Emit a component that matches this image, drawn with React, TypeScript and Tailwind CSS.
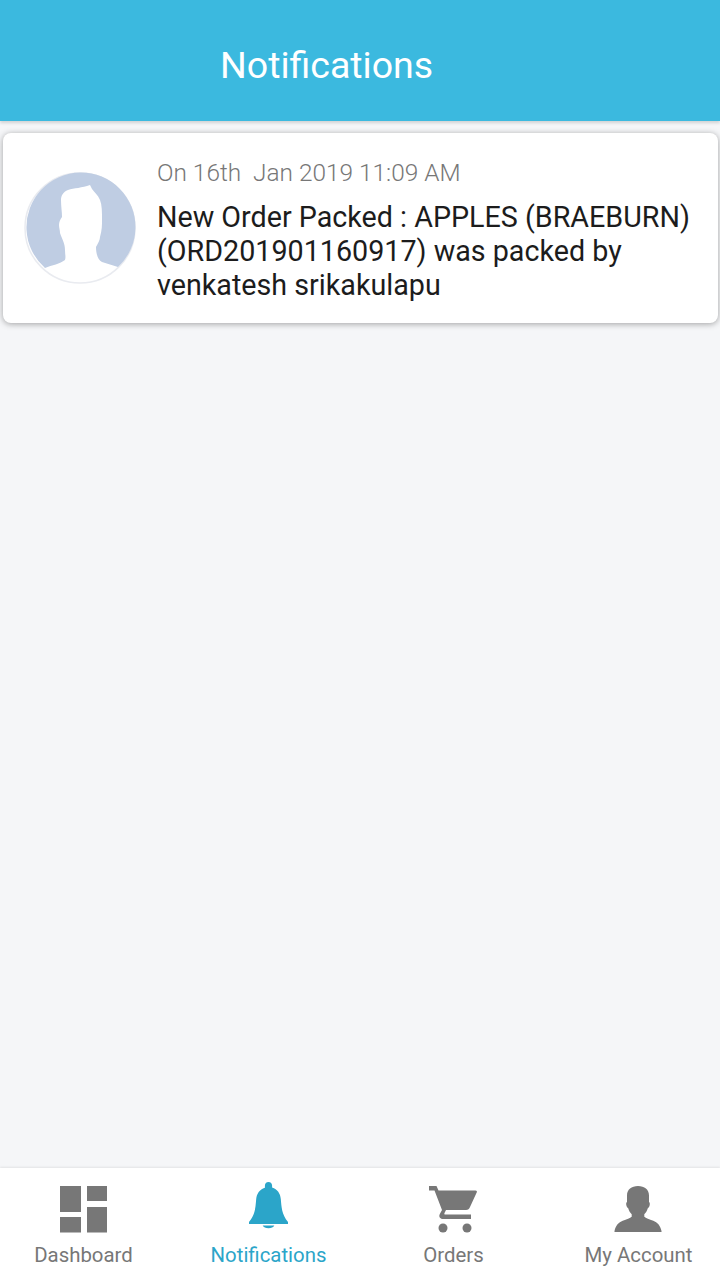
import type { ReactNode } from 'react';

function DashboardIcon() {
  return (
    <svg width="48" height="48" viewBox="1 0 48 48" fill="#777777">
      <rect x="1" y="1" width="21" height="26" />
      <rect x="28" y="1" width="20" height="15" />
      <rect x="1" y="32" width="21" height="15.500" />
      <rect x="28" y="22" width="20" height="25.500" />
    </svg>
  );
}

function BellIcon() {
  return (
    <svg width="48" height="48" viewBox="0.500 0 48 48" fill="#2ba5c9" className="overflow-visible">
      <path d="M24-3c2.200 0 3.600 1.600 3.600 3.600v2c5.400 1.800 8.200 6 8.700 11.400.7 8 .9 15.500 7.200 23V39h-39v-1.900c6.300-7.500 6.500-15 7.200-23 .5-5.400 3.300-9.600 8.700-11.400v-2C20.400-1.400 21.800-3 24-3z" />
      <path d="M18.200 40.500h11.600c-.8 1.700-3 2.700-5.800 2.700s-5-1-5.800-2.700z" />
    </svg>
  );
}

function CartIcon() {
  return (
    <svg width="48" height="48" viewBox="1 0 48 48" fill="#777777" className="overflow-visible">
      <path d="M0 1h7.500l2 4.500H46.500c1.200 0 1.700.8 1.300 1.800L41 22c-.7 1.700-2 3-4 3H17l-1.500 3c-.5 1 0 1.500 1 1.500H42V34H14c-3 0-4.500-2.500-3.200-5l2.200-4L5.500 5.500H0z" />
      <circle cx="14" cy="43" r="4.500" />
      <circle cx="38" cy="43" r="4.500" />
    </svg>
  );
}

function AccountIcon() {
  return (
    <svg width="48" height="48" viewBox="1 0 48 48" fill="#777777" className="overflow-visible">
      <path d="M24 1c6.500 0 11 3.500 11 9.500V17c.9.300 1 2 .6 3.600-.4 1.600-1 2.400-1.800 2.600-.7 2.600-2 4.600-3.500 6v2.500c1.500 1.500 5 2.500 9 4 4 1.500 7 4.500 8.200 10.300v1H.5v-1C1.700 40.200 4.700 37.200 8.700 35.700c4-1.500 7.500-2.500 9-4v-2.500c-1.500-1.400-2.800-3.400-3.500-6-.8-.2-1.400-1-1.800-2.600-.4-1.600-.3-3.300.6-3.600v-6.500C13 4.500 17.500 1 24 1z" />
    </svg>
  );
}

function NavItem({ icon, label, active }: { icon: ReactNode; label: string; active?: boolean }) {
  return (
    <div className="flex flex-col items-center pt-[17px]">
      {icon}
      <span className={`mt-[9px] text-[20.400px] leading-[26px] whitespace-nowrap ${active ? 'text-[#2ba5c9]' : 'text-[#777777]'}`}>
        {label}
      </span>
    </div>
  );
}

export default function App() {
  return (
    <div className="flex h-[1280px] w-[720px] flex-col overflow-hidden bg-[#f5f6f8] font-['Roboto',sans-serif]">
      <header className="flex h-[121px] shrink-0 items-center bg-[#3bb9df] pt-[11px] pl-[220px] shadow-[0_2px_3px_rgba(0,0,0,0.15)]">
        <h1 className="text-[37.500px] font-normal leading-none text-white">Notifications</h1>
      </header>

      <main className="flex-1 pt-[12px] pl-[3px] pr-[2px]">
        <div className="flex h-[190px] rounded-[8px] bg-white pl-[21px] shadow-[0_1px_6px_rgba(0,0,0,0.35)]">
          <div className="mt-[39px] h-[112px] w-[112px] shrink-0">
            <svg width="112" height="112" viewBox="0 0 112 112">
              <circle cx="56" cy="56" r="55" fill="#fff" stroke="#e9ebf0" strokeWidth="1.500" />
              <path
                d="M21 96A54.500 54.500 0 1 1 94 95L78 90C74 88 72 82 72 75C74 71 76 68 76 65C78 58 78 53 78 48C78 40 78 33 76 28C74 23 70 20 68 17L66 13C58 16 50 16 44 18C39 20 37 24 37 28C37 34 38 40 38 45C36 48 35 50 35 53C35 56 36 58 36 61C38 67 41 71 41 78C41 82 42 85 41 88C36 92 28 93 21 96z"
                fill="#bfcde3"
              />
            </svg>
          </div>
          <div className="ml-[21px] flex-1 pt-[26px]">
            <p className="whitespace-pre text-[24.400px] font-light leading-[28px] text-[#777777]">On 16th  Jan 2019 11:09 AM</p>
            <p className="mt-[13px] text-[28.700px] leading-[34px] text-[#1c1c1c]">
              New Order Packed : APPLES (BRAEBURN)
              <br />
              (ORD201901160917) was packed by
              <br />
              venkatesh srikakulapu
            </p>
          </div>
        </div>
      </main>

      <nav className="h-[112px] shrink-0 overflow-hidden bg-white shadow-[0_-1px_2px_rgba(0,0,0,0.08)]">
        <div className="-ml-[9px] grid w-[740px] grid-cols-4">
          <NavItem icon={<DashboardIcon />} label="Dashboard" />
          <NavItem icon={<BellIcon />} label="Notifications" active />
          <NavItem icon={<CartIcon />} label="Orders" />
          <NavItem icon={<AccountIcon />} label="My Account" />
        </div>
      </nav>
    </div>
  );
}
